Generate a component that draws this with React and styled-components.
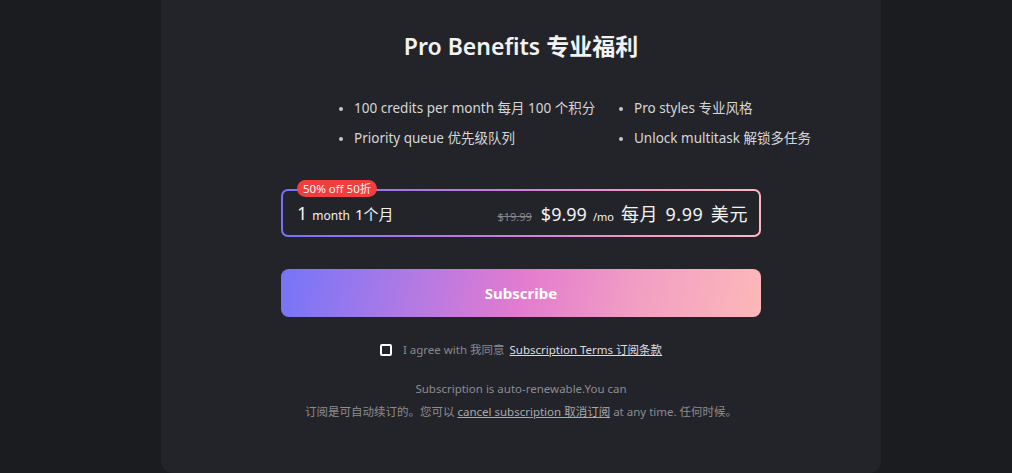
import styled, { createGlobalStyle } from 'styled-components';

const GlobalStyle = createGlobalStyle`
  html, body {
    margin: 0;
    padding: 0;
    background: #1b1c20;
    font-family: 'Noto Sans', 'Noto Sans CJK SC', sans-serif;
  }
`;

const benefits = [
  '100 credits per month 每月 100 个积分',
  'Pro styles 专业风格',
  'Priority queue 优先级队列',
  'Unlock multitask 解锁多任务',
];

export default function App() {
  return (
    <Page>
      <GlobalStyle />
      <Panel>
        <Title>Pro Benefits 专业福利</Title>
        <BenefitList>
          {benefits.map((b) => (
            <Benefit key={b}>{b}</Benefit>
          ))}
        </BenefitList>
        <Content>
          <PlanCard>
            <Badge>50% off 50折</Badge>
            <PlanInner>
              <Duration>
                <Big>1</Big>
                <Small>month</Small>
                <Mid>1个月</Mid>
              </Duration>
              <Price>
                <OldPrice>$19.99</OldPrice>
                <Big>$9.99</Big>
                <Unit>/mo</Unit>
                <Big $wide>每月 9.99 美元</Big>
              </Price>
            </PlanInner>
          </PlanCard>
          <SubscribeButton>Subscribe</SubscribeButton>
          <Agree>
            <Checkbox />
            <span>I agree with 我同意</span>
            <TermsLink>Subscription Terms 订阅条款</TermsLink>
          </Agree>
          <Note>
            <NoteLine>Subscription is auto-renewable.You can</NoteLine>
            <NoteLine>
              订阅是可自动续订的。您可以 <NoteLink>cancel subscription 取消订阅</NoteLink> at any time. 任何时候。
            </NoteLine>
          </Note>
        </Content>
      </Panel>
    </Page>
  );
}

const Page = styled.div`
  min-height: 473px;
  padding-left: 30px;
  display: flex;
  justify-content: center;
`;

const Panel = styled.div`
  width: 720px;
  min-height: 473px;
  box-sizing: border-box;
  background: #232429;
  border-radius: 0 0 12px 12px;
  padding-top: 30px;
  display: flex;
  flex-direction: column;
  align-items: center;
`;

const Title = styled.h1`
  margin: 0;
  font-size: 23px;
  line-height: 33px;
  font-weight: 600;
  color: #f2f2f2;
`;

const BenefitList = styled.ul`
  list-style: disc;
  margin: 36px 0 0;
  padding: 0 0 0 193px;
  align-self: stretch;
  display: grid;
  grid-template-columns: 280px auto;
  row-gap: 11px;
  color: #d6d6d8;
  font-size: 13.5px;
  line-height: 19px;
`;

const Benefit = styled.li`
  white-space: nowrap;
  &::marker {
    color: #c8c8cc;
    font-size: 11px;
  }
`;

const Content = styled.div`
  width: 480px;
  margin-top: 41px;
  display: flex;
  flex-direction: column;
  align-items: center;
`;

const PlanCard = styled.div`
  position: relative;
  width: 100%;
  box-sizing: border-box;
  padding: 2px;
  border-radius: 7px;
  background: linear-gradient(90deg, #7772f5 0%, #c77ae0 45%, #f29ac6 75%, #fbb8c0 100%);
`;

const PlanInner = styled.div`
  height: 44px;
  border-radius: 5px;
  background: #232429;
  display: flex;
  align-items: center;
  justify-content: space-between;
  padding: 0 11px 0 14px;
  color: #f2f2f2;
`;

const Badge = styled.div`
  position: absolute;
  left: 16px;
  top: -9px;
  height: 17px;
  padding: 0 6px;
  border-radius: 9px;
  background: #f03e3e;
  color: #fff3f0;
  font-size: 11.5px;
  line-height: 17px;
  white-space: nowrap;
`;

const Duration = styled.div`
  display: flex;
  align-items: baseline;
  gap: 5px;
`;

const Price = styled.div`
  display: flex;
  align-items: baseline;
  gap: 7px;
`;

const Big = styled.span`
  font-size: 18px;
  word-spacing: ${(p) => (p.$wide ? '2px' : '0')};
  letter-spacing: ${(p) => (p.$wide ? '0.6px' : '0')};
`;

const Mid = styled.span`
  font-size: 15px;
`;

const Small = styled.span`
  font-size: 12px;
`;

const Unit = styled.span`
  font-size: 11px;
  margin-left: -1px;
`;

const OldPrice = styled.span`
  font-size: 11px;
  color: #85858a;
  text-decoration: line-through;
  margin-right: 2px;
`;

const SubscribeButton = styled.button`
  margin-top: 32px;
  width: 100%;
  height: 48px;
  border: none;
  border-radius: 8px;
  background: linear-gradient(100deg, #7575f8 0%, #b77ae2 30%, #e37bcf 50%, #f2a0c3 75%, #fdb8b8 100%);
  color: #ffffff;
  font-family: inherit;
  font-size: 15px;
  font-weight: 700;
  cursor: pointer;
`;

const Agree = styled.label`
  margin-top: 25px;
  display: flex;
  align-items: center;
  gap: 5px;
  font-size: 11.5px;
  line-height: 16px;
  color: #88888e;
`;

const Checkbox = styled.span`
  width: 8px;
  height: 8px;
  border: 2px solid #ffffff;
  border-radius: 2px;
  margin-right: 6px;
`;

const TermsLink = styled.a`
  color: #dcdce0;
  text-decoration: underline;
  cursor: pointer;
`;

const Note = styled.div`
  margin-top: 23px;
  text-align: center;
  font-size: 11.5px;
  color: #8c8c91;
  display: flex;
  flex-direction: column;
  gap: 7px;
`;

const NoteLine = styled.div`
  line-height: 16px;
  white-space: nowrap;
`;

const NoteLink = styled.a`
  color: #a8a8ad;
  text-decoration: underline;
  cursor: pointer;
`;
